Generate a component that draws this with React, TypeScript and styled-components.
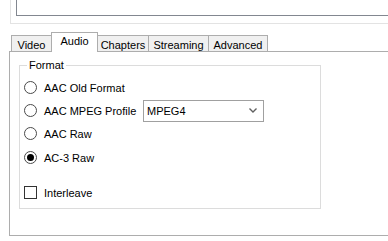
import React from 'react';
import styled, { createGlobalStyle } from 'styled-components';

const GlobalStyle = createGlobalStyle`
  html, body {
    margin: 0;
    padding: 0;
    background: #ffffff;
    overflow: hidden;
  }
  body {
    font-family: "Liberation Sans", Arial, sans-serif;
    font-size: 11px;
    color: #000000;
  }
`;

const tabs = [
    { label: 'Video', width: 41 },
    { label: 'Audio', width: 47 },
    { label: 'Chapters', width: 52 },
    { label: 'Streaming', width: 61 },
    { label: 'Advanced', width: 60 },
];

const formats = ['AAC Old Format', 'AAC MPEG Profile', 'AAC Raw', 'AC-3 Raw'];

const Window = styled.div`
  width: 388px;
  height: 241px;
`;

const OuterFrame = styled.div`
  margin-left: 10px;
  height: 23px;
  padding-left: 5px;
  border-left: 1px solid #e3e3e3;
  border-bottom: 1px solid #e3e3e3;
`;

const InnerBox = styled.div`
  height: 15px;
  border-left: 1px solid #828790;
  border-bottom: 1px solid #828790;
`;

const TabControl = styled.div`
  margin: 8px 0 0 9px;
`;

const TabStrip = styled.div`
  display: flex;
  align-items: flex-end;
  height: 19px;
  padding-left: 2px;
`;

const Tab = styled.div<{ $active?: boolean; $width: number }>`
  position: relative;
  z-index: ${(p) => (p.$active ? 2 : 1)};
  box-sizing: border-box;
  width: ${(p) => p.$width}px;
  height: ${(p) => (p.$active ? 20 : 16)}px;
  margin-left: -1px;
  margin-bottom: ${(p) => (p.$active ? -1 : 0)}px;
  padding-top: ${(p) => (p.$active ? 2 : 3)}px;
  border: 1px solid #adadad;
  border-bottom: none;
  background: ${(p) => (p.$active ? '#ffffff' : '#f0f0f0')};
  text-align: center;
  line-height: 12px;
  white-space: nowrap;
  &:first-child {
    margin-left: 0;
  }
`;

const TabPanel = styled.div`
  box-sizing: border-box;
  height: 185px;
  padding: 13px 0 0 9px;
  border: 1px solid #adadad;
  border-right: none;
  background: #ffffff;
`;

const GroupBox = styled.div`
  width: 300px;
  height: 142px;
  border: 1px solid #dcdcdc;
`;

const Legend = styled.div`
  display: table;
  margin: -7px 0 0 7px;
  padding: 0 2px;
  line-height: 13px;
  background: #ffffff;
`;

const Options = styled.div`
  display: flex;
  flex-direction: column;
  padding: 4px 0 0 4px;
`;

const OptionRow = styled.div<{ $gap?: number }>`
  display: flex;
  align-items: center;
  height: 23px;
  margin-top: ${(p) => p.$gap ?? 0}px;
`;

const Radio = styled.span<{ $checked?: boolean }>`
  display: flex;
  align-items: center;
  justify-content: center;
  box-sizing: border-box;
  width: 13px;
  height: 13px;
  border: 1px solid #4a4a4a;
  border-radius: 50%;
  background: #ffffff;
  &::after {
    content: '';
    display: ${(p) => (p.$checked ? 'block' : 'none')};
    width: 7px;
    height: 7px;
    border-radius: 50%;
    background: #000000;
  }
`;

const CheckBox = styled.span`
  box-sizing: border-box;
  width: 13px;
  height: 13px;
  border: 1px solid #333333;
  background: #ffffff;
`;

const Label = styled.span<{ $width?: number }>`
  margin-left: 7px;
  width: ${(p) => (p.$width ? `${p.$width}px` : 'auto')};
  white-space: nowrap;
`;

const ComboBox = styled.div`
  display: flex;
  align-items: center;
  justify-content: space-between;
  box-sizing: border-box;
  width: 121px;
  height: 22px;
  padding: 0 6px 0 3px;
  border: 1px solid #a0a0a0;
  background: #ffffff;
`;

const Chevron = () => (
    <svg width="8" height="5" viewBox="0 0 8 5">
        <polyline points="0.5,0.5 4,4 7.5,0.5" fill="none" stroke="#606060" strokeWidth="1.4"/>
    </svg>
);

export default function App() {
    return (
        <Window>
            <GlobalStyle/>
            <OuterFrame>
                <InnerBox/>
            </OuterFrame>
            <TabControl>
                <TabStrip>
                    {tabs.map((t) => (
                        <Tab key={t.label} $width={t.width} $active={t.label === 'Audio'}>
                            {t.label}
                        </Tab>
                    ))}
                </TabStrip>
                <TabPanel>
                    <GroupBox>
                        <Legend>Format</Legend>
                        <Options>
                            {formats.map((f) => (
                                <OptionRow key={f} $gap={f === 'AC-3 Raw' ? 1 : 0}>
                                    <Radio $checked={f === 'AC-3 Raw'}/>
                                    {f === 'AAC MPEG Profile' ? (
                                        <>
                                            <Label $width={99}>{f}</Label>
                                            <ComboBox>
                                                <span>MPEG4</span>
                                                <Chevron/>
                                            </ComboBox>
                                        </>
                                    ) : (
                                        <Label>{f}</Label>
                                    )}
                                </OptionRow>
                            ))}
                            <OptionRow $gap={12}>
                                <CheckBox/>
                                <Label>Interleave</Label>
                            </OptionRow>
                        </Options>
                    </GroupBox>
                </TabPanel>
            </TabControl>
        </Window>
    );
}
